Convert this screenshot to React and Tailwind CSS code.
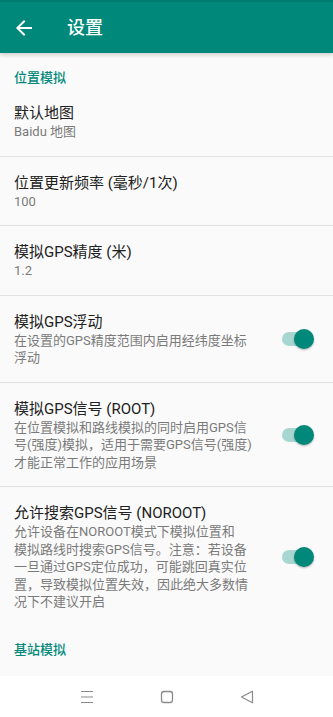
import React from 'react';

const FONT = { fontFamily: 'Roboto, "Noto Sans CJK SC", sans-serif' };

const items = [
  { title: '默认地图', lines: ['Baidu 地图'] },
  { title: '位置更新频率 (毫秒/1次)', lines: ['100'] },
  { title: '模拟GPS精度 (米)', lines: ['1.2'] },
  {
    title: '模拟GPS浮动',
    lines: ['在设置的GPS精度范围内启用经纬度坐标', '浮动'],
    toggle: true
  },
  {
    title: '模拟GPS信号 (ROOT)',
    lines: ['在位置模拟和路线模拟的同时启用GPS信', '号(强度)模拟，适用于需要GPS信号(强度)', '才能正常工作的应用场景'],
    toggle: true
  },
  {
    title: '允许搜索GPS信号 (NOROOT)',
    lines: [
      '允许设备在NOROOT模式下模拟位置和',
      '模拟路线时搜索GPS信号。注意：若设备',
      '一旦通过GPS定位成功，可能跳回真实位',
      '置，导致模拟位置失效，因此绝大多数情',
      '况下不建议开启'
    ],
    toggle: true,
    last: true
  }
];

function Toggle() {
  return (
    <div className="relative w-[32px] h-[20px] shrink-0">
      <div className="absolute left-0 top-[3px] w-[28px] h-[14px] rounded-full bg-[#a8d6d1]" />
      <div className="absolute right-0 top-0 w-[20px] h-[20px] rounded-full bg-[#00897b] shadow-[0_1px_2px_rgba(0,0,0,0.3)]" />
    </div>
  );
}

function PrefRow({ item, first }) {
  return (
    <div className={item.last ? '' : 'border-b border-[#e2e2e2]'}>
      <div className={`flex items-center pl-[14px] pr-[19px] ${first ? 'pt-[15px]' : 'pt-4'} pb-[15px]`}>
        <div className="flex-1 min-w-0">
          <div className="text-[15px] leading-5 text-[#212121] whitespace-nowrap">{item.title}</div>
          {item.lines.map((line, i) => (
            <div key={i} className="text-[13px] leading-[17.5px] text-[#7a7a7a] whitespace-nowrap">{line}</div>
          ))}
        </div>
        {item.toggle && <Toggle />}
      </div>
    </div>
  );
}

function Category({ label, top }) {
  return (
    <div className={`pl-[14px] ${top ? 'pt-[15px]' : 'pt-[14px]'} text-[13px] leading-5 font-medium text-[#00897b]`}>{label}</div>
  );
}

export default function App() {
  return (
    <div className="w-[333px] h-[717px] flex flex-col bg-[#fafafa] overflow-hidden" style={FONT}>
      {/* Toolbar */}
      <div className="relative z-10 h-[53px] shrink-0 flex items-center bg-[#00897b] border-t-2 border-[#007a6d] shadow-[0_2px_4px_rgba(0,0,0,0.18)]">
        <svg viewBox="0 0 24 24" width="24" height="24" className="ml-[12px] fill-white">
          <path d="M20 11H7.83l5.59-5.59L12 4l-8 8 8 8 1.41-1.41L7.83 13H20v-2z" />
        </svg>
        <span className="ml-[31px] text-[18px] font-medium text-white">设置</span>
      </div>

      {/* Preferences */}
      <div className="flex-1 overflow-hidden">
        <Category label="位置模拟" top />
        {items.map((item, i) => (
          <PrefRow key={i} item={item} first={i === 0} />
        ))}
        <Category label="基站模拟" />
      </div>

      {/* Navigation bar */}
      <div className="h-[41px] shrink-0 bg-white flex items-center justify-center gap-[56px]">
        <svg width="24" height="24" viewBox="0 0 24 24" fill="none" stroke="#8a8a8a" strokeWidth="1.2">
          <path d="M6 6.5h12M6 12h12M6 17.5h12" />
        </svg>
        <svg width="24" height="24" viewBox="0 0 24 24" fill="none" stroke="#8a8a8a" strokeWidth="1.3">
          <rect x="6.5" y="6.5" width="11" height="11" rx="2.5" />
        </svg>
        <svg width="24" height="24" viewBox="0 0 24 24" fill="none" stroke="#8a8a8a" strokeWidth="1.2" strokeLinejoin="round">
          <path d="M17.5 6.2v11.6L6.5 12z" />
        </svg>
      </div>
    </div>
  );
}
